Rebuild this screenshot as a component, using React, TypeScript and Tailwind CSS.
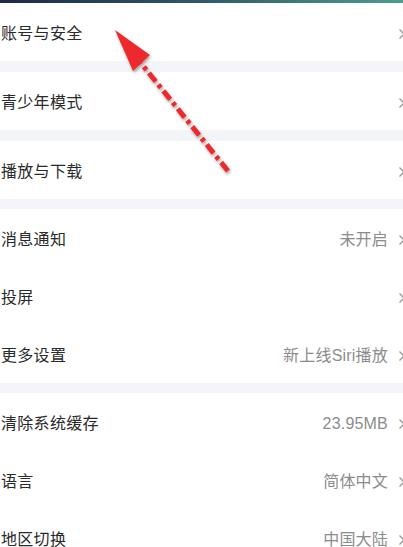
import React from "react";

type Row = { label: string; value?: string };

const groups: { rows: Row[]; gapAfter: string }[] = [
  { rows: [{ label: "账号与安全" }], gapAfter: "h-[11px]" },
  { rows: [{ label: "青少年模式" }], gapAfter: "h-[11px]" },
  { rows: [{ label: "播放与下载" }], gapAfter: "h-[10px]" },
  {
    rows: [
      { label: "消息通知", value: "未开启" },
      { label: "投屏" },
      { label: "更多设置", value: "新上线Siri播放" },
    ],
    gapAfter: "h-[10px]",
  },
  {
    rows: [
      { label: "清除系统缓存", value: "23.95MB" },
      { label: "语言", value: "简体中文" },
      { label: "地区切换", value: "中国大陆" },
    ],
    gapAfter: "h-0",
  },
];

function Chevron() {
  return (
    <svg width="8" height="12" viewBox="0 0 8 12" className="mr-[-3px] shrink-0">
      <path d="M1.5 1.5 L6 6 L1.5 10.5" fill="none" stroke="#9a9a9a" strokeWidth="1.3" />
    </svg>
  );
}

export default function App() {
  return (
    <div
      className="relative w-[403px] h-[547px] overflow-hidden bg-white"
      style={{ fontFamily: '"Liberation Sans", "Noto Sans CJK SC", sans-serif' }}
    >
      <div className="h-[3px] bg-linear-to-r from-[#1d2a44] via-[#2f5a66] to-[#4d9d90]" />
      {groups.map((g, gi) => (
        <div key={gi}>
          {g.rows.map((r) => (
            <div key={r.label} className="h-[58px] flex items-center justify-between pl-[1px] pt-[3px]">
              <span className="text-[16px] text-[#2a2a2a] tracking-[0.3px]">{r.label}</span>
              <div className="flex items-center gap-[10px]">
                {r.value && <span className="text-[16px] text-[#8c8c8c] tracking-[0.2px]">{r.value}</span>}
                <Chevron />
              </div>
            </div>
          ))}
          <div className={`${g.gapAfter} bg-[#f4f5f8]`} />
        </div>
      ))}
      <svg
        className="absolute left-0 top-0 pointer-events-none"
        width="403"
        height="547"
        viewBox="0 0 403 547"
      >
        <defs>
          <filter id="sh" x="-20%" y="-20%" width="140%" height="140%">
            <feDropShadow dx="1" dy="2" stdDeviation="1.5" floodColor="#000" floodOpacity="0.35" />
          </filter>
        </defs>
        <g filter="url(#sh)">
          <line
            x1="228"
            y1="171"
            x2="140"
            y2="62"
            stroke="#ec2a2e"
            strokeWidth="5"
            strokeDasharray="11 4 4 4"
            strokeLinecap="butt"
          />
          <polygon points="115,30 150,55 133,71" fill="#ec2a2e" />
        </g>
      </svg>
    </div>
  );
}
